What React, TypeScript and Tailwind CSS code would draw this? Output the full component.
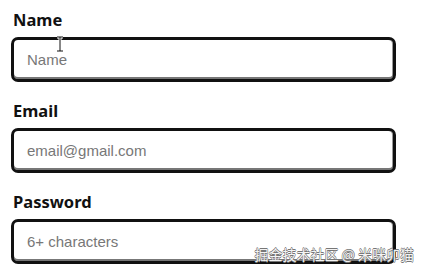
import React from 'react'

const fields = [
  { label: 'Name', placeholder: 'Name', type: 'text' },
  { label: 'Email', placeholder: 'email@gmail.com', type: 'email' },
  { label: 'Password', placeholder: '6+ characters', type: 'password' },
]

const App = () => {
  return (
    <div className="relative h-[272px] w-[424px] overflow-hidden bg-white">
      <form className="flex flex-col gap-[17px] pl-[11px] pt-2">
        {fields.map((f) => (
          <div key={f.label} className="flex flex-col">
            <label className="mb-[5px] h-6 pl-[2px] font-['Noto_Sans',sans-serif] text-[16.5px] leading-6 font-bold text-[#111]">
              {f.label}
            </label>
            <input
              type={f.type}
              placeholder={f.placeholder}
              className="h-[45px] w-[385px] rounded-[7px] border-[3px] border-[#111] bg-white px-[13px] font-['Liberation_Sans',Arial,sans-serif] text-[15px] text-[#222] shadow-[inset_0_-2px_0_#777,inset_-1px_0_0_#999] outline-none placeholder:text-[#777]"
            />
          </div>
        ))}
      </form>

      {/* mouse cursor over the first input */}
      <svg className="absolute left-[56px] top-[36px]" width="8" height="16" viewBox="0 0 8 16">
        <path d="M1 1h6M4 1v14M1 15h6" stroke="#fff" strokeWidth="3" fill="none" />
        <path d="M1 1h6M4 1v14M1 15h6" stroke="#111" strokeWidth="1" fill="none" />
      </svg>

      {/* watermark */}
      <div className="absolute right-[10px] top-[245px] font-['Noto_Sans_CJK_SC',sans-serif] text-[14px] leading-[18px] text-[#f4f4f4] [text-shadow:0.6px_0_0_#777,-0.6px_0_0_#777,0_0.6px_0_#777,0_-0.6px_0_#777]">
        掘金技术社区 @ 米咪卯猫
      </div>
    </div>
  )
}

export default App
